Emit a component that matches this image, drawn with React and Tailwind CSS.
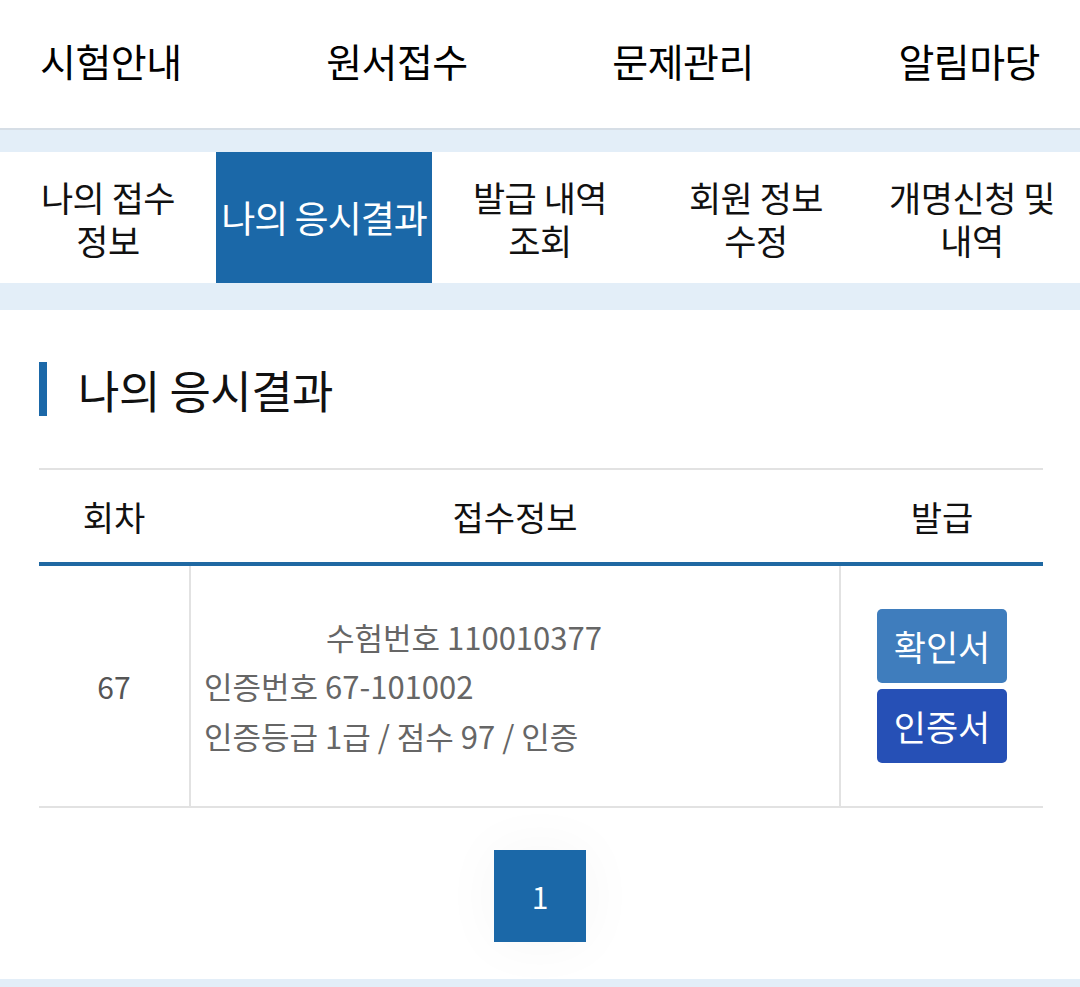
export default function App() {
  const top = ["시험안내", "원서접수", "문제관리", "알림마당"];
  const sub = [
    ["나의 접수", "정보"],
    ["나의 응시결과"],
    ["발급 내역", "조회"],
    ["회원 정보", "수정"],
    ["개명신청 및", "내역"],
  ];
  return (
    <div
      className="w-[1080px] h-[987px] bg-white flex flex-col overflow-hidden"
      style={{ fontFamily: '"Noto Sans CJK KR", "Noto Sans", sans-serif' }}
    >
      {/* top nav */}
      <div className="h-[128px] flex items-center justify-between px-[40px] pb-[8px] shrink-0">
        {top.map((t) => (
          <div key={t} className="text-[39px] text-black leading-none tracking-[-0.5px]">
            {t}
          </div>
        ))}
      </div>
      <div className="h-[2px] bg-[#d6dee6] shrink-0" />
      <div className="h-[22px] bg-[#e3eef8] shrink-0" />
      {/* sub nav */}
      <div className="h-[131px] grid grid-cols-5 shrink-0">
        {sub.map((lines, i) => (
          <div
            key={i}
            className={
              "flex flex-col items-center justify-center text-center leading-[43px] " +
              (i === 1 ? "bg-[#1b68a8] text-white text-[37px] tracking-[-1px]" : "text-[#111] text-[35px] tracking-[-0.5px]")
            }
          >
            {lines.map((l) => (
              <div key={l} className="whitespace-nowrap">{l}</div>
            ))}
          </div>
        ))}
      </div>
      <div className="h-[27px] bg-[#e3eef8] shrink-0" />

      {/* heading */}
      <div className="flex items-center mt-[52px] ml-[39px] shrink-0">
        <div className="w-[8px] h-[54px] bg-[#1b68a8]" />
        <div className="ml-[31px] text-[45px] text-[#111] leading-none tracking-[-0.5px]">나의 응시결과</div>
      </div>

      {/* table */}
      <div className="ml-[39px] w-[1004px] mt-[52px] shrink-0">
        <div className="grid grid-cols-[150px_1fr_202px] h-[98px] border-t-2 border-[#e2e2e2] border-b-4 border-b-[#1f68a2] text-[34px] text-[#111]">
          <div className="flex items-center justify-center">회차</div>
          <div className="flex items-center justify-center">접수정보</div>
          <div className="flex items-center justify-center">발급</div>
        </div>
        <div className="grid grid-cols-[150px_1fr_202px] h-[242px] border-b-2 border-[#e2e2e2]">
          <div className="flex items-center justify-center text-[30px] text-[#555]">67</div>
          <div className="border-l-2 border-r-2 border-[#e2e2e2] flex flex-col justify-center pl-[13px] text-[31px] text-[#666] leading-[49.5px]">
            <div className="pl-[122px]">수험번호 110010377</div>
            <div>인증번호 67-101002</div>
            <div>인증등급 1급 / 점수 97 / 인증</div>
          </div>
          <div className="flex flex-col items-center justify-center gap-[6px]">
            <div className="w-[130px] h-[74px] rounded-[5px] bg-[#3f7dbd] text-white text-[35px] flex items-center justify-center">확인서</div>
            <div className="w-[130px] h-[74px] rounded-[5px] bg-[#2650b6] text-white text-[35px] flex items-center justify-center">인증서</div>
          </div>
        </div>
      </div>

      {/* pagination */}
      <div className="flex justify-center mt-[42px] shrink-0">
        <div className="w-[92px] h-[92px] bg-[#1b68a8] text-white text-[30px] flex items-center justify-center shadow-[0_0_60px_rgba(0,0,0,0.04)]">
          1
        </div>
      </div>
      <div className="flex-1" />
      <div className="h-[8px] bg-[#e3eef8] shrink-0" />
    </div>
  );
}
